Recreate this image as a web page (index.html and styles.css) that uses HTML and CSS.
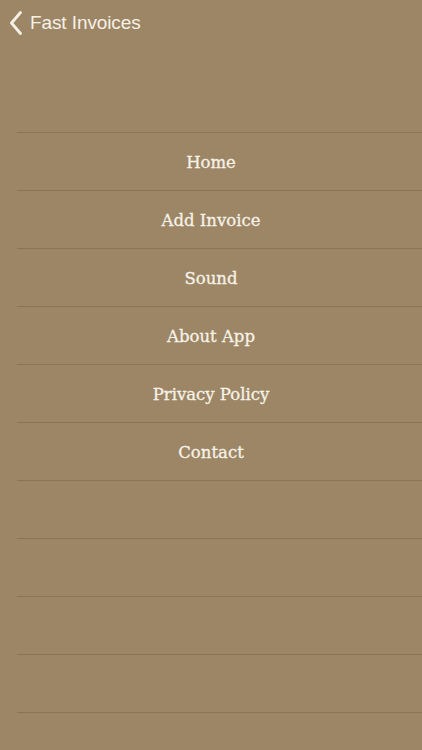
FILE: index.html
```html
<!DOCTYPE html>
<html>
<head>
<meta charset="utf-8">
<link rel="stylesheet" href="styles.css">
</head>
<body>
<div class="screen">
  <header class="nav">
    <svg class="chev" width="14" height="24" viewBox="0 0 14 24"><path d="M11.5 1.5 L2.5 12 L11.5 22.5" fill="none" stroke="#f6f1e7" stroke-width="2.8" stroke-linecap="round" stroke-linejoin="round"/></svg>
    <span class="nav-title">Fast Invoices</span>
  </header>
  <div class="spacer"></div>
  <ul class="menu">
    <li class="row">Home</li>
    <li class="row">Add Invoice</li>
    <li class="row">Sound</li>
    <li class="row">About App</li>
    <li class="row">Privacy Policy</li>
    <li class="row">Contact</li>
    <li class="row"></li>
    <li class="row"></li>
    <li class="row"></li>
    <li class="row"></li>
    <li class="row"></li>
  </ul>
</div>
</body>
</html>
```

FILE: styles.css
```css
html, body {
  margin: 0;
  padding: 0;
  background: #9c8665;
}
.screen {
  width: 422px;
  height: 750px;
  overflow: hidden;
  background: #9c8665;
  display: flex;
  flex-direction: column;
}
.nav {
  flex: none;
  height: 44px;
  display: flex;
  align-items: center;
  padding-left: 9px;
  box-sizing: border-box;
  gap: 7px;
}
.chev {
  display: block;
  margin-top: 2px;
}
.nav-title {
  font-family: "Liberation Sans", Arial, sans-serif;
  font-size: 19px;
  color: #f6f1e7;
  margin-top: 1px;
  letter-spacing: -0.1px;
}
.spacer {
  height: 88px;
  flex: none;
}
.menu {
  flex: none;
  list-style: none;
  margin: 0;
  padding: 0;
}
.row {
  height: 58px;
  box-sizing: border-box;
  margin-left: 17px;
  border-top: 1px solid #8a7354;
  display: flex;
  align-items: center;
  justify-content: center;
  padding-right: 17px;
  padding-top: 1px;
  font-family: "DejaVu Serif", "Liberation Serif", serif;
  font-size: 16.5px;
  color: #f7f2e8;
  -webkit-text-stroke: 0.3px #f7f2e8;
}
```
